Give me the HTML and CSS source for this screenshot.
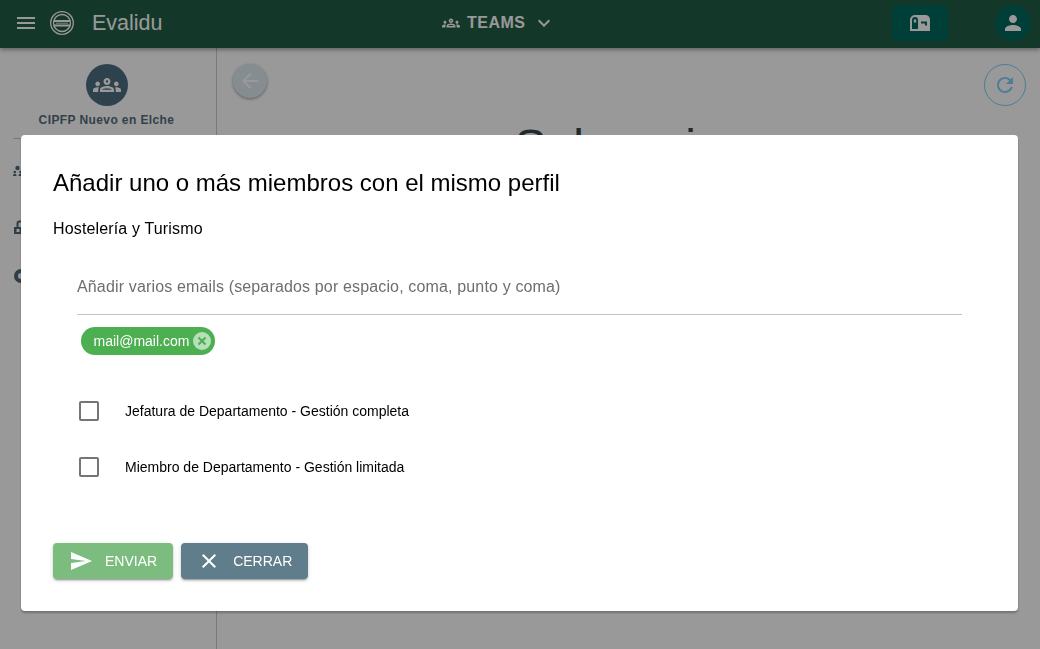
FILE: index.html
```html
<!DOCTYPE html>
<html lang="es">
<head>
<meta charset="utf-8">
<title>Evalidu</title>
<link rel="stylesheet" href="styles.css">
</head>
<body>
<div class="page">
  <header class="toolbar">
    <div class="tb-left">
      <svg class="ic24" viewBox="0 0 24 24"><path d="M3 18h18v-2H3v2zm0-5h18v-2H3v2zm0-7v2h18V6H3z"/></svg>
      <svg class="logo" viewBox="0 0 24 24">
        <circle cx="12" cy="12" r="11.300"/>
        <circle cx="12" cy="12" r="8.500"/>
        <path d="M3.500 10h17M3.500 14.500h17" stroke-width="1.800"/>
        <path d="M6 12.200h12" stroke-width=".8"/>
      </svg>
      <span class="brand">Evalidu</span>
    </div>
    <div class="tb-center">
      <svg class="ic18" viewBox="0 0 24 24"><path d="M4,13c1.1,0,2-0.9,2-2c0-1.1-0.9-2-2-2s-2,0.9-2,2C2,12.1,2.9,13,4,13z M5.13,14.1C4.76,14.04,4.39,14,4,14 c-0.99,0-1.93,0.21-2.78,0.58C0.48,14.9,0,15.62,0,16.43V18l4.5,0v-1.61C4.5,15.56,4.73,14.78,5.13,14.1z M20,13c1.1,0,2-0.9,2-2 c0-1.1-0.9-2-2-2s-2,0.9-2,2C18,12.1,18.9,13,20,13z M24,16.43c0-0.81-0.48-1.53-1.22-1.85C21.93,14.21,20.99,14,20,14 c-0.39,0-0.76,0.04-1.13,0.1c0.4,0.68,0.63,1.46,0.63,2.29V18l4.5,0V16.43z M16.24,13.65c-1.17-0.52-2.61-0.9-4.24-0.9 c-1.63,0-3.07,0.39-4.24,0.9C6.68,14.13,6,15.21,6,16.39V18h12v-1.61C18,15.21,17.32,14.13,16.24,13.65z M8.07,16 c0.09-0.23,0.13-0.39,0.91-0.69c0.97-0.38,1.99-0.56,3.02-0.56s2.05,0.18,3.02,0.56c0.77,0.3,0.81,0.46,0.91,0.69H8.07z M12,8 c0.55,0,1,0.45,1,1s-0.45,1-1,1s-1-0.45-1-1S11.45,8,12,8 M12,6c-1.66,0-3,1.34-3,3c0,1.66,1.34,3,3,3s3-1.34,3-3 C15,7.34,13.66,6,12,6L12,6z"/></svg>
      <span class="teams">TEAMS</span>
      <svg class="ic24" viewBox="0 0 24 24"><path d="M16.59 8.59L12 13.17 7.41 8.59 6 10l6 6 6-6z"/></svg>
    </div>
    <div class="tb-right">
      <span class="mailbtn"><svg class="ic24" viewBox="0 0 24 24"><path fill-rule="evenodd" d="M7 4h10.500A4.500 4.500 0 0 1 22 8.500V20H2V9a5 5 0 0 1 5-5zM7 6a3 3 0 0 0-3 3v9h6V9a3 3 0 0 0-3-3zM5.800 8.500h2.400v3H5.800zM13 10.500v2h4v2h2v-4z"/></svg></span>
      <span class="userbtn"><svg class="ic24" viewBox="0 0 24 24"><path d="M12 12c2.21 0 4-1.790 4-4s-1.790-4-4-4-4 1.790-4 4 1.790 4 4 4zm0 2c-2.670 0-8 1.340-8 4v2h16v-2c0-2.660-5.330-4-8-4z"/></svg></span>
    </div>
  </header>
  <div class="content">
    <aside class="sidebar">
      <div class="org">
        <span class="org-avatar"><svg class="ic28" viewBox="0 0 24 24"><path d="M4,13c1.1,0,2-0.9,2-2c0-1.1-0.9-2-2-2s-2,0.9-2,2C2,12.1,2.9,13,4,13z M5.13,14.1C4.76,14.04,4.39,14,4,14 c-0.99,0-1.93,0.21-2.78,0.58C0.48,14.9,0,15.62,0,16.43V18l4.5,0v-1.61C4.5,15.56,4.73,14.78,5.13,14.1z M20,13c1.1,0,2-0.9,2-2 c0-1.1-0.9-2-2-2s-2,0.9-2,2C18,12.1,18.9,13,20,13z M24,16.43c0-0.81-0.48-1.53-1.22-1.85C21.93,14.21,20.99,14,20,14 c-0.39,0-0.76,0.04-1.13,0.1c0.4,0.68,0.63,1.46,0.63,2.29V18l4.5,0V16.43z M16.24,13.65c-1.17-0.52-2.61-0.9-4.24-0.9 c-1.63,0-3.07,0.39-4.24,0.9C6.68,14.13,6,15.21,6,16.39V18h12v-1.61C18,15.21,17.32,14.13,16.24,13.65z M8.07,16 c0.09-0.23,0.13-0.39,0.91-0.69c0.97-0.38,1.99-0.56,3.02-0.56s2.05,0.18,3.02,0.56c0.77,0.3,0.81,0.46,0.91,0.69H8.07z M12,8 c0.55,0,1,0.45,1,1s-0.45,1-1,1s-1-0.45-1-1S11.45,8,12,8 M12,6c-1.66,0-3,1.34-3,3c0,1.66,1.34,3,3,3s3-1.34,3-3 C15,7.34,13.66,6,12,6L12,6z"/></svg></span>
        <span class="org-name">CIPFP Nuevo en Elche</span>
      </div>
      <nav class="side-nav">
        <svg class="ic24" viewBox="0 0 24 24"><circle cx="4.500" cy="8" r="2.200"/><circle cx="1.800" cy="12" r="1.300"/><circle cx="7.500" cy="12" r="1.300"/><path d="M0 16c0-1.500.800-2.300 1.800-2.300S3.500 14.500 3.500 16zM5.500 16c0-1.500.900-2.300 2-2.300S9.500 14.500 9.500 16z"/></svg>
        <svg class="ic24" viewBox="0 0 24 24"><path fill-rule="evenodd" d="M1 15h12v7H1zM3.500 17v3h3v-3z"/><path d="M3.500 15v-3.500a3 3 0 0 1 3-3H13v2H6.500a1 1 0 0 0-1 1V15z"/></svg>
        <svg class="ic24" viewBox="0 0 24 24"><path fill-rule="evenodd" d="M8 5a7 7 0 1 0 0 14 7 7 0 0 0 0-14zm0 4a3 3 0 1 1 0 6 3 3 0 0 1 0-6z"/></svg>
      </nav>
    </aside>
    <main class="main">
      <div class="main-top">
        <span class="back"><svg class="ic24" viewBox="0 0 24 24"><path d="M20 11H7.830l5.590-5.590L12 4l-8 8 8 8 1.410-1.410L7.830 13H20v-2z"/></svg></span>
        <span class="refresh"><svg class="ic24" viewBox="0 0 24 24"><path d="M17.650 6.350C16.200 4.900 14.210 4 12 4c-4.420 0-7.990 3.580-7.990 8s3.570 8 7.990 8c3.730 0 6.840-2.550 7.730-6h-2.080c-.820 2.330-3.040 4-5.650 4-3.310 0-6-2.690-6-6s2.690-6 6-6c1.660 0 3.140.690 4.220 1.780L13 11h7V4l-2.350 2.350z"/></svg></span>
      </div>
      <h1 class="page-title">Solvencia</h1>
    </main>
  </div>
</div>

<div class="overlay"></div>

<section class="dialog">
  <h2 class="dialog-title">Añadir uno o más miembros con el mismo perfil</h2>
  <p class="dialog-sub">Hostelería y Turismo</p>
  <div class="field">
    <div class="field-input">Añadir varios emails (separados por espacio, coma, punto y coma)</div>
    <div class="chips">
      <span class="chip">mail@mail.com
        <svg class="chip-x" viewBox="0 0 18 18"><circle cx="9" cy="9" r="9"/><path d="M5.500 5.500l7 7M12.500 5.500l-7 7"/></svg>
      </span>
    </div>
  </div>
  <div class="options">
    <label class="option"><span class="box"></span><span>Jefatura de Departamento - Gestión completa</span></label>
    <label class="option"><span class="box"></span><span>Miembro de Departamento - Gestión limitada</span></label>
  </div>
  <div class="actions">
    <span class="btn btn-send"><svg class="ic24" viewBox="0 0 24 24"><path d="M2.010 21L23 12 2.010 3 2 10l15 2-15 2z"/></svg>ENVIAR</span>
    <span class="btn btn-close"><svg class="ic24" viewBox="0 0 24 24"><path d="M19 6.410L17.590 5 12 10.590 6.410 5 5 6.410 10.590 12 5 17.590 6.410 19 12 13.410 17.590 19 19 17.590 13.410 12 19 6.410z"/></svg>CERRAR</span>
  </div>
</section>
</body>
</html>
```
FILE: styles.css
```css
* { box-sizing: border-box; }
html, body { margin: 0; height: 100%; overflow: hidden; }
body { font-family: "Liberation Sans", Arial, sans-serif; background: #fff; color: #000; }
svg { display: block; flex: none; fill: currentColor; }
.ic18 { width: 18px; height: 18px; }
.ic24 { width: 24px; height: 24px; }
.ic28 { width: 28px; height: 28px; }

.page { height: 649px; display: flex; flex-direction: column; }
.toolbar { height: 48px; flex: none; background: #215c43; color: #fff; display: flex; align-items: center; padding: 0 9px 2px 14px; position: relative; box-shadow: 0 2px 4px rgba(0,0,0,.35); z-index: 1; }
.tb-left { display: flex; align-items: center; width: 428px; flex: none; }
.logo { width: 24px; height: 24px; margin-left: 12px; fill: none; stroke: #fff; stroke-width: 1.300; }
.brand { font-size: 21.500px; margin-left: 18px; }
.tb-center { display: flex; align-items: center; gap: 7px; flex: 1; }
.teams { font-size: 16px; font-weight: 700; letter-spacing: .5px; margin-right: -1px; }
.tb-right { display: flex; align-items: center; gap: 47px; }
.mailbtn { width: 56px; height: 36px; border-radius: 4px; background: #00695c; display: flex; align-items: center; justify-content: center; }
.userbtn { width: 36px; height: 36px; border-radius: 50%; background: #00695c; display: flex; align-items: center; justify-content: center; }

.content { flex: 1; display: flex; min-height: 0; }
.sidebar { width: 217px; flex: none; border-right: 1px solid rgba(0,0,0,.2); padding: 16px 0 0 13px; }
.org { display: flex; flex-direction: column; align-items: center; padding-right: 16px; border-bottom: 1px solid rgba(0,0,0,.2); height: 75px; }
.org-avatar { width: 42px; height: 42px; border-radius: 50%; background: #4e6e82; color: #fff; display: flex; align-items: center; justify-content: center; }
.org-name { font-size: 12px; font-weight: 700; letter-spacing: .4px; color: #546e7a; margin-top: 7px; white-space: nowrap; }
.side-nav { display: flex; flex-direction: column; gap: 28px; padding-top: 21px; color: #4d6a7a; }
.main { flex: 1; padding: 16px 14px 0 16px; }
.main-top { display: flex; justify-content: space-between; }
.back { width: 34px; height: 34px; border-radius: 50%; background: #e0ecf2; color: #fff; display: flex; align-items: center; justify-content: center; box-shadow: 0 1px 3px rgba(0,0,0,.4); }
.refresh { width: 42px; height: 42px; border-radius: 50%; border: 1px solid #80d0ff; color: #80d0ff; display: flex; align-items: center; justify-content: center; }
.page-title { margin: 13px 0 0; font-size: 48px; font-weight: 400; color: #37474f; text-align: center; padding-right: 22px; }

.overlay { position: fixed; inset: 0; background: rgba(0,0,0,.4); z-index: 2; }

.dialog { position: absolute; left: 21px; top: 135px; width: 997px; height: 476px; z-index: 3; background: #fff; border-radius: 4px; padding: 32px; box-shadow: 0 2px 2px rgba(0,0,0,.25); display: flex; flex-direction: column; }
.dialog-title { margin: 0; font-size: 24px; line-height: 32px; font-weight: 400; }
.dialog-sub { margin: 18px 0 0; font-size: 16px; line-height: 24px; letter-spacing: .15px; }
.field { margin: 23px 24px 0; }
.field-input { height: 51px; padding-top: 11px; line-height: 24px; font-size: 16px; letter-spacing: .15px; color: #6e6e6e; border-bottom: 1px solid #c4c4c4; }
.chips { padding: 12px 4px 0; display: flex; }
.chip { height: 28px; border-radius: 14px; background: #4caf50; color: #fff; font-size: 14px; display: inline-flex; align-items: center; padding: 0 4px 0 12.500px; gap: 3.500px; }
.chip-x { width: 18px; height: 18px; fill: #b7dfb9; stroke: none; }
.chip-x path { fill: none; stroke: #4caf50; stroke-width: 2; }
.options { margin-top: 40px; display: flex; flex-direction: column; gap: 24px; padding-left: 26px; }
.option { display: flex; align-items: center; height: 32px; font-size: 14px; }
.box { width: 20px; height: 20px; border: 2px solid #757575; border-radius: 2px; margin-right: 26px; }
.actions { display: flex; gap: 8px; margin-top: auto; }
.btn { height: 36px; border-radius: 4px; color: #fff; font-size: 14px; display: flex; align-items: center; gap: 12px; padding: 0 16px; box-shadow: 0 3px 1px -2px rgba(0,0,0,.2), 0 2px 2px rgba(0,0,0,.14), 0 1px 5px rgba(0,0,0,.12); }
.btn-send { background: #7cbd7f; }
.btn-close { background: #607d8b; }
```
